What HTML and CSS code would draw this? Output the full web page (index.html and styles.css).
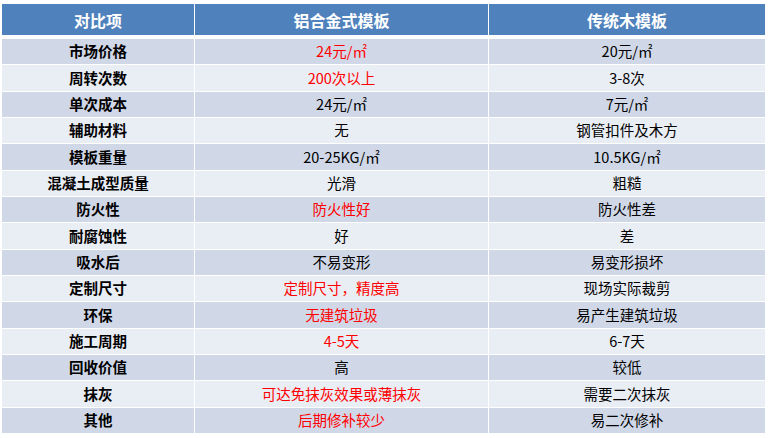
FILE: index.html
```html
<!DOCTYPE html>
<html lang="zh">
<head>
<meta charset="utf-8">
<link rel="stylesheet" href="styles.css">
</head>
<body>
<div class="page">
  <div class="table">
    <div class="cell head">对比项</div><div class="cell head">铝合金式模板</div><div class="cell head">传统木模板</div>

    <div class="cell dark label">市场价格</div><div class="cell dark red">24元/㎡</div><div class="cell dark">20元/㎡</div>
    <div class="cell light label">周转次数</div><div class="cell light red">200次以上</div><div class="cell light">3-8次</div>
    <div class="cell dark label">单次成本</div><div class="cell dark">24元/㎡</div><div class="cell dark">7元/㎡</div>
    <div class="cell light label">辅助材料</div><div class="cell light">无</div><div class="cell light">钢管扣件及木方</div>
    <div class="cell dark label">模板重量</div><div class="cell dark">20-25KG/㎡</div><div class="cell dark">10.5KG/㎡</div>
    <div class="cell light label">混凝土成型质量</div><div class="cell light">光滑</div><div class="cell light">粗糙</div>
    <div class="cell dark label">防火性</div><div class="cell dark red">防火性好</div><div class="cell dark">防火性差</div>
    <div class="cell light label">耐腐蚀性</div><div class="cell light">好</div><div class="cell light">差</div>
    <div class="cell dark label">吸水后</div><div class="cell dark">不易变形</div><div class="cell dark">易变形损坏</div>
    <div class="cell light label">定制尺寸</div><div class="cell light red">定制尺寸，精度高</div><div class="cell light">现场实际裁剪</div>
    <div class="cell dark label">环保</div><div class="cell dark red">无建筑垃圾</div><div class="cell dark">易产生建筑垃圾</div>
    <div class="cell light label">施工周期</div><div class="cell light red">4-5天</div><div class="cell light">6-7天</div>
    <div class="cell dark label">回收价值</div><div class="cell dark">高</div><div class="cell dark">较低</div>
    <div class="cell light label">抹灰</div><div class="cell light red">可达免抹灰效果或薄抹灰</div><div class="cell light">需要二次抹灰</div>
    <div class="cell dark label">其他</div><div class="cell dark red">后期修补较少</div><div class="cell dark">易二次修补</div>
  </div>
</div>
</body>
</html>
```
FILE: styles.css
```css
html, body {
  margin: 0;
  padding: 0;
  background: #ffffff;
}
.page {
  padding: 4px 0 0 2px;
}
.table {
  display: grid;
  width: 763px;
  grid-template-columns: 192px 293px 276px;
  grid-template-rows: 34px repeat(15, 25.333px);
  column-gap: 1px;
  row-gap: 1px;
  font-family: "Noto Sans CJK SC", "Noto Sans", sans-serif;
  font-size: 14.5px;
  color: #000000;
}
.cell {
  display: flex;
  align-items: center;
  justify-content: center;
  white-space: nowrap;
  line-height: 1;
}
.head {
  align-self: start;
  height: 31px;
  background: #4f81bd;
  color: #ffffff;
  font-weight: bold;
  font-size: 16px;
}
.dark {
  background: #d0d8e8;
}
.light {
  background: #e9edf4;
}
.label {
  font-weight: bold;
}
.red {
  color: #ff0000;
}
```
